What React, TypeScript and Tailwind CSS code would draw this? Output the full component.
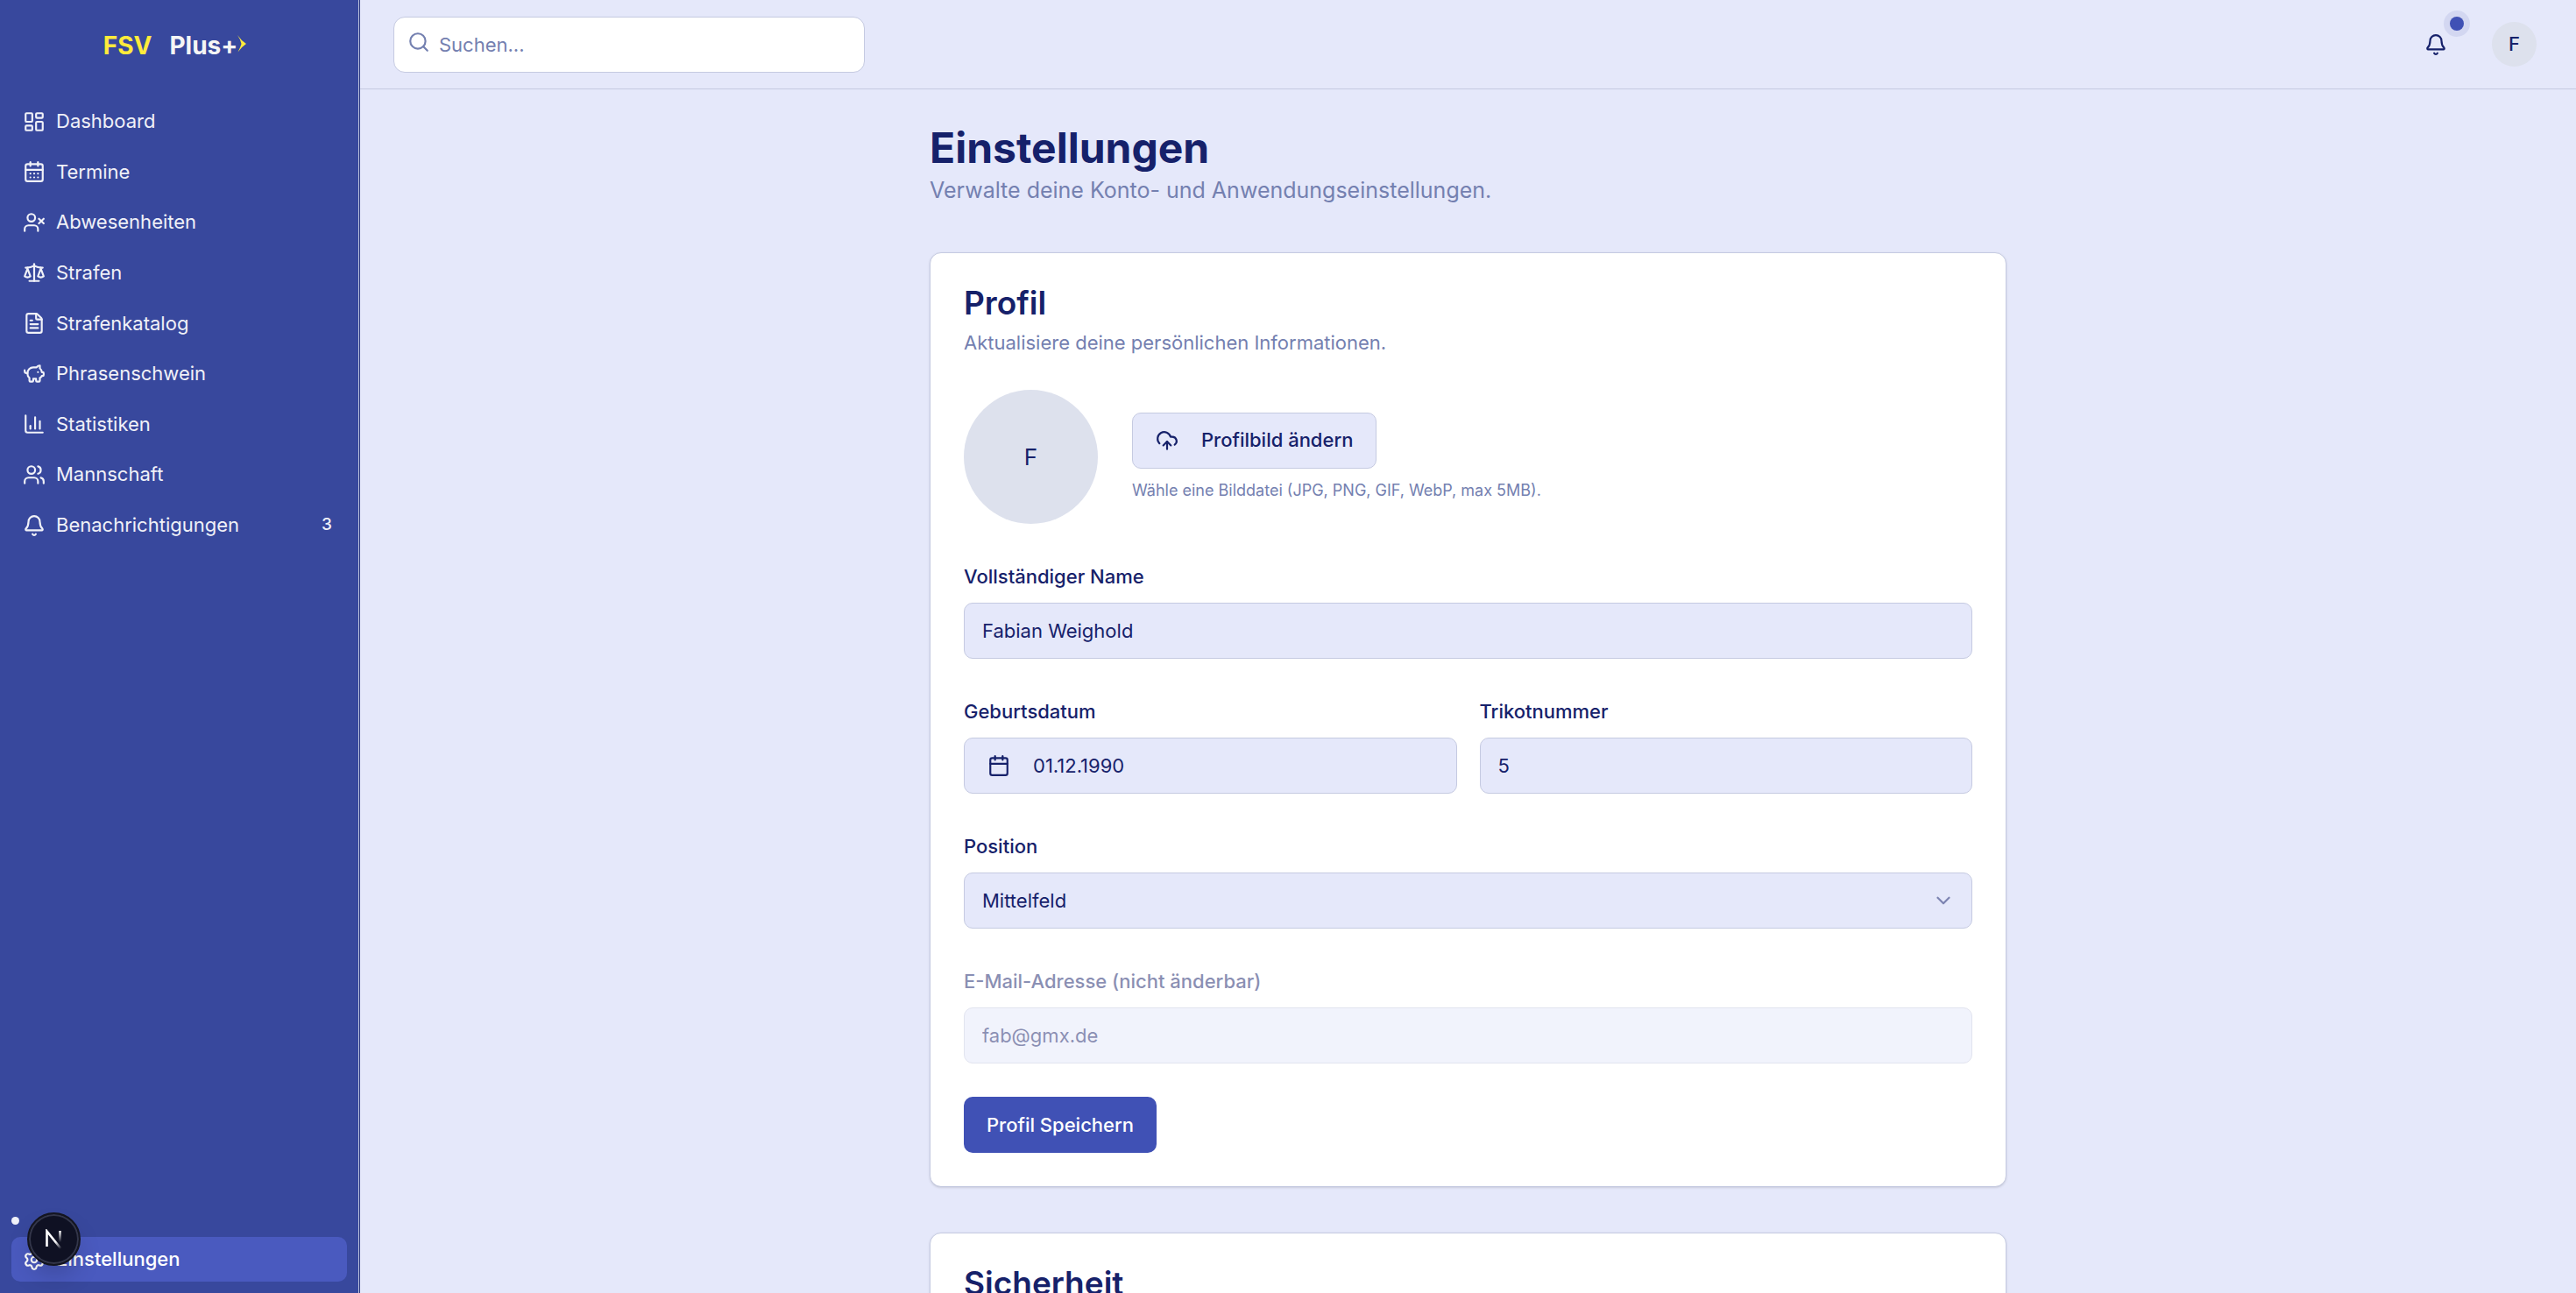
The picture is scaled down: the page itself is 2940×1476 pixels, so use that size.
import React from "react";
import {
  LayoutDashboard, CalendarDays, UserX, Scale, FileText, PiggyBank, ChartColumn, Users, Bell,
  Settings, Search, CloudUpload, Calendar, ChevronDown, type LucideIcon,
} from "lucide-react";

type NavItem = { label: string; icon: LucideIcon; count?: number };

const navItems: NavItem[] = [
  { label: "Dashboard", icon: LayoutDashboard },
  { label: "Termine", icon: CalendarDays },
  { label: "Abwesenheiten", icon: UserX },
  { label: "Strafen", icon: Scale },
  { label: "Strafenkatalog", icon: FileText },
  { label: "Phrasenschwein", icon: PiggyBank },
  { label: "Statistiken", icon: ChartColumn },
  { label: "Mannschaft", icon: Users },
  { label: "Benachrichtigungen", icon: Bell, count: 3 },
];

const control =
  "h-16 w-full rounded-[10px] border border-[#c5cae1] bg-[#e5e8fa] px-5 text-[22px] text-[#16216a]";

function Logo() {
  return (
    <a href="#" className="flex h-[103px] items-center justify-center pr-[10px] text-[28px] font-bold">
      <span className="text-[#ffeb3b]">FSV</span>
      <span className="ml-5 text-[#f5f5f5]">Plus+</span>
      <svg viewBox="0 0 10 20" className="mb-1 h-5 w-[10px]" fill="#ffeb3b" aria-hidden="true">
        <path d="M0 0 Q4 6 10 10 Q4 14 0.5 19.5 Q3.5 14 4.5 10 Q3.5 5 0 0 Z" />
      </svg>
    </a>
  );
}

function NextBadge() {
  return (
    <button
      aria-label="Next.js Dev Tools"
      className="absolute bottom-[31px] left-[31px] flex size-[61px] items-center justify-center rounded-full border-2 border-[#14151f] bg-[#0f1123] shadow-[inset_0_0_0_2px_#33364a,0_16px_32px_-8px_rgba(0,0,0,0.24)]"
    >
      <svg viewBox="0 0 20 24" className="h-6 w-5" fill="none" aria-hidden="true">
        <defs>
          <linearGradient id="diag" x1="12" y1="14" x2="18" y2="22" gradientUnits="userSpaceOnUse">
            <stop stopColor="#fff" />
            <stop offset="1" stopColor="#fff" stopOpacity="0" />
          </linearGradient>
          <linearGradient id="stem" x1="16" y1="2" x2="16" y2="15" gradientUnits="userSpaceOnUse">
            <stop stopColor="#fff" />
            <stop offset="1" stopColor="#fff" stopOpacity="0" />
          </linearGradient>
        </defs>
        <path d="M1.5 20 V2.5 L18 23" stroke="url(#diag)" strokeWidth="2.6" />
        <path d="M16.5 2 V15" stroke="url(#stem)" strokeWidth="2.6" />
      </svg>
    </button>
  );
}

function Sidebar() {
  return (
    <aside className="relative flex w-[411px] shrink-0 flex-col border-r border-[#28357f] bg-[#38489d] text-[22px] text-[#f0f1f8]">
      <div className="flex grow flex-col border-r border-[#c5cae1]">
        <Logo />
        <nav aria-label="Hauptnavigation" className="flex grow flex-col justify-between px-[13px] pt-[10px] pb-[13px]">
          <ul className="flex h-[512px] flex-col justify-between">
            {navItems.map(({ label, icon: Icon, count }) => (
              <li key={label}>
                <a href="#" className="flex h-[51px] items-center gap-3 rounded-[10px] px-[13px]">
                  <Icon size={26} />
                  <span className="grow">{label}</span>
                  {count && <span className="px-1 text-[19px] font-medium">{count}</span>}
                </a>
              </li>
            ))}
          </ul>
          <div>
            <span className="mb-[14px] block size-[9px] rounded-full bg-[#f0f1f8]" />
            <a href="#" aria-current="page" className="flex h-[51px] items-center gap-3 rounded-[10px] bg-[#4a5abf] px-[13px] font-medium text-white">
              <Settings size={26} />
              Einstellungen
            </a>
          </div>
        </nav>
      </div>
      <NextBadge />
    </aside>
  );
}

function TopBar() {
  return (
    <header className="flex h-[102px] shrink-0 items-center justify-between border-b border-[#c5cae1] pr-[45px] pl-[38px]">
      <div className="relative w-[538px]">
        <Search size={26} className="absolute top-4 left-4 text-[#7480b0]" />
        <input
          type="search"
          aria-label="Suchen"
          placeholder="Suchen..."
          className="h-16 w-full rounded-[13px] border border-[#c5cae1] bg-white pl-[51px] text-[22px] placeholder:text-[#7480b0]"
        />
      </div>
      <div className="flex items-center gap-8">
        <button aria-label="Benachrichtigungen" className="relative flex size-16 items-center justify-center text-[#16216a]">
          <Bell size={26} />
          <span className="absolute -top-[7px] -right-[7px] flex size-[30px] items-center justify-center rounded-full bg-[#d3d7f1]">
            <span className="size-4 rounded-full bg-[#4051b5]" />
          </span>
        </button>
        <button aria-label="Benutzermenü" className="flex size-[51px] items-center justify-center rounded-full bg-[#dde1ed] text-[22px] font-medium text-[#16216a]">
          F
        </button>
      </div>
    </header>
  );
}

function Field({ id, label, disabled, children }: { id: string; label: string; disabled?: boolean; children: React.ReactNode }) {
  return (
    <div className={disabled ? "flex flex-col gap-[18px] opacity-50" : "flex flex-col gap-[18px]"}>
      <label htmlFor={id} className="text-[22px] leading-6 font-medium">{label}</label>
      {children}
    </div>
  );
}

function Card({ title, children }: { title: string; children: React.ReactNode }) {
  return (
    <section className="rounded-[13px] border border-[#c5cae1] bg-white p-[38px] shadow-sm">
      <h2 className="text-[37px] leading-[38px] font-semibold">{title}</h2>
      {children}
    </section>
  );
}

function ProfileCard() {
  return (
    <Card title="Profil">
      <p className="mt-[10px] text-[22px] leading-8 text-[#7480b0]">Aktualisiere deine persönlichen Informationen.</p>
      <form className="mt-[38px] flex flex-col items-start gap-[38px]">
        <div className="flex w-full flex-col gap-12">
          <div className="flex items-center gap-[39px]">
            <div className="flex size-[153px] items-center justify-center rounded-full bg-[#dde1ed] text-[26px]">F</div>
            <div className="flex flex-col items-start gap-3">
              <button type="button" className="flex h-16 items-center gap-[26px] rounded-[10px] border border-[#c5cae1] bg-[#e5e8fa] px-[26px] text-[22px] font-medium">
                <CloudUpload size={26} />
                Profilbild ändern
              </button>
              <p className="text-[18px] leading-[26px] text-[#7480b0]">Wähle eine Bilddatei (JPG, PNG, GIF, WebP, max 5MB).</p>
            </div>
          </div>
          <Field id="name" label="Vollständiger Name">
            <input id="name" defaultValue="Fabian Weighold" className={control} />
          </Field>
          <div className="grid grid-cols-2 gap-[26px]">
            <Field id="birthday" label="Geburtsdatum">
              <button id="birthday" type="button" className="flex h-16 w-full items-center gap-[26px] rounded-[10px] border border-[#c5cae1] bg-[#e5e8fa] px-[26px] text-[22px]">
                <Calendar size={26} />
                01.12.1990
              </button>
            </Field>
            <Field id="number" label="Trikotnummer">
              <input id="number" inputMode="numeric" defaultValue="5" className={control} />
            </Field>
          </div>
          <Field id="position" label="Position">
            <div className="relative">
              <select id="position" defaultValue="Mittelfeld" className={control + " appearance-none"}>
                <option>Tor</option>
                <option>Abwehr</option>
                <option>Mittelfeld</option>
                <option>Sturm</option>
              </select>
              <ChevronDown size={26} className="pointer-events-none absolute top-[19px] right-5 opacity-50" />
            </div>
          </Field>
          <Field id="email" label="E-Mail-Adresse (nicht änderbar)" disabled>
            <input id="email" type="email" disabled defaultValue="fab@gmx.de" className={control} />
          </Field>
        </div>
        <button type="button" className="h-16 rounded-[10px] bg-[#4051b5] px-[26px] text-[22px] font-medium text-white">Profil Speichern</button>
      </form>
    </Card>
  );
}

export default function App() {
  return (
    <div className="flex h-screen overflow-hidden bg-[#e5e8fa] font-['Inter',sans-serif] text-[#16216a]">
      <Sidebar />
      <div className="flex min-w-0 grow flex-col">
        <TopBar />
        <main className="grow overflow-hidden px-[38px] pt-[38px]">
          <div className="mx-auto flex max-w-[1229px] flex-col gap-[52px]">
            <div>
              <h1 className="text-[48px] leading-[58px] font-bold">Einstellungen</h1>
              <p className="text-[25px] leading-[38px] text-[#7480b0]">Verwalte deine Konto- und Anwendungseinstellungen.</p>
            </div>
            <ProfileCard />
            <Card title="Sicherheit">
              <p className="mt-[10px] text-[22px] leading-8 text-[#7480b0]">Ändere dein Passwort.</p>
            </Card>
          </div>
        </main>
      </div>
    </div>
  );
}
